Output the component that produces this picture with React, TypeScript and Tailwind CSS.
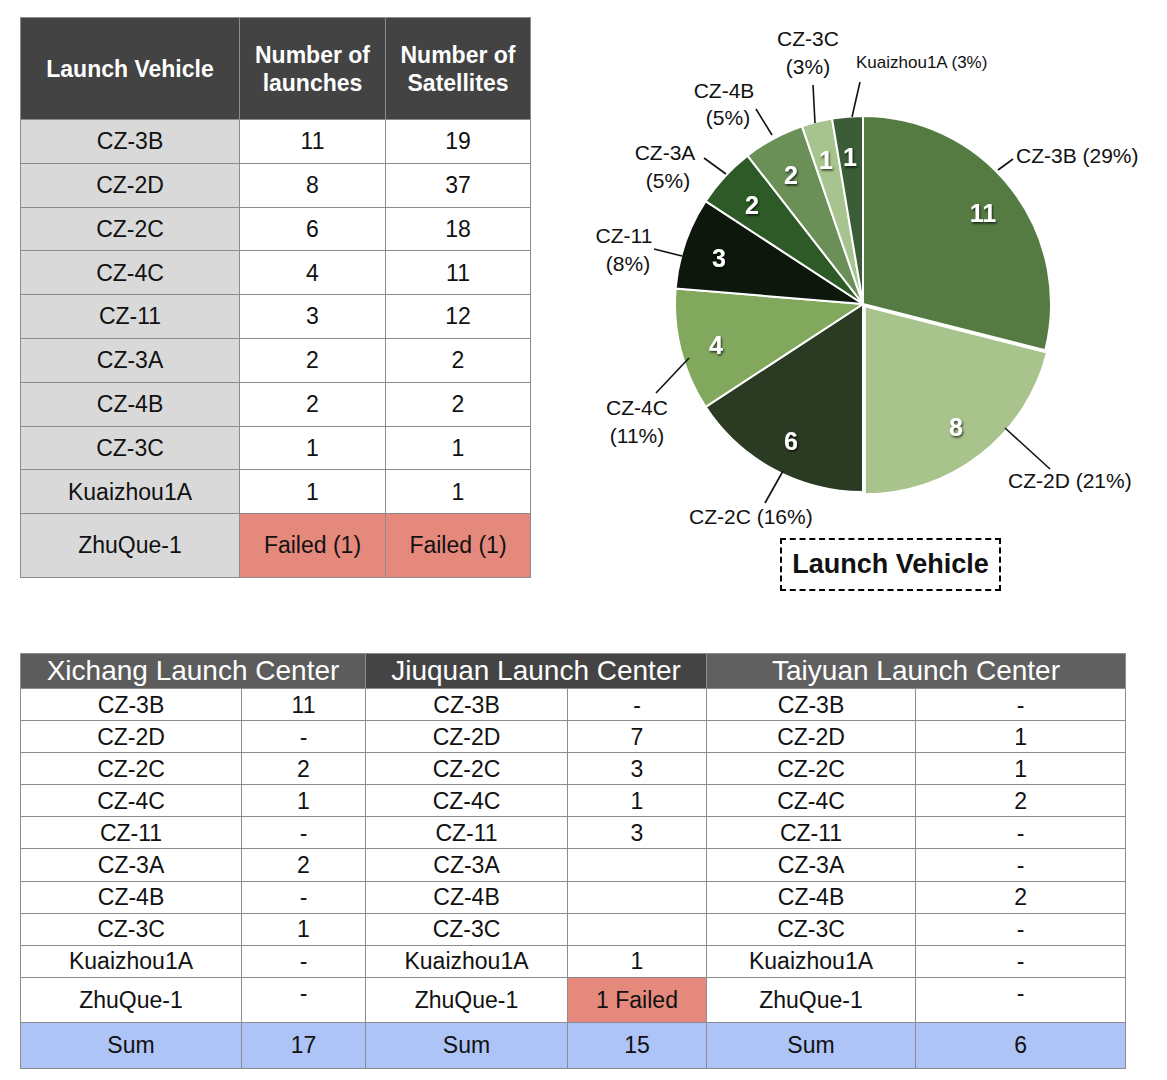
import React from 'react';

const topRows = [
  ['CZ-3B', '11', '19'],
  ['CZ-2D', '8', '37'],
  ['CZ-2C', '6', '18'],
  ['CZ-4C', '4', '11'],
  ['CZ-11', '3', '12'],
  ['CZ-3A', '2', '2'],
  ['CZ-4B', '2', '2'],
  ['CZ-3C', '1', '1'],
  ['Kuaizhou1A', '1', '1'],
];

const vehicles = ['CZ-3B', 'CZ-2D', 'CZ-2C', 'CZ-4C', 'CZ-11', 'CZ-3A', 'CZ-4B', 'CZ-3C', 'Kuaizhou1A'];
const xichang = ['11', '-', '2', '1', '-', '2', '-', '1', '-'];
const jiuquan = ['-', '7', '3', '1', '3', '', '', '', '1'];
const taiyuan = ['-', '1', '1', '2', '-', '-', '2', '-', '-'];

const slices = [
  { v: 11, color: '#557a42', explode: 0 },
  { v: 8, color: '#a9c38c', explode: 3 },
  { v: 6, color: '#2a3a23', explode: 0 },
  { v: 4, color: '#82a85e', explode: 0 },
  { v: 3, color: '#0d170b', explode: 0 },
  { v: 2, color: '#2e5a27', explode: 0 },
  { v: 2, color: '#6a9058', explode: 0 },
  { v: 1, color: '#a7c48e', explode: 0 },
  { v: 1, color: '#3a5d37', explode: 0 },
];

const numbers = [
  { t: '11', x: 982, y: 213 },
  { t: '8', x: 955, y: 427 },
  { t: '6', x: 790, y: 441 },
  { t: '4', x: 715, y: 345 },
  { t: '3', x: 718, y: 258 },
  { t: '2', x: 751, y: 205 },
  { t: '2', x: 790, y: 175 },
  { t: '1', x: 825, y: 160 },
  { t: '1', x: 849, y: 157 },
];

const leaders = [
  [997, 170, 1012, 159],
  [1004, 428, 1049, 469],
  [782, 471, 764, 503],
  [688, 358, 655, 393],
  [653, 249, 681, 256],
  [703, 158, 725, 174],
  [755, 109, 771, 135],
  [812, 85, 814, 123],
  [859, 82, 851, 117],
];

const CX = 862;
const CY = 304;
const R = 188;

function pt(a: number, dx = 0, dy = 0) {
  const rad = (a * Math.PI) / 180;
  return [CX + dx + R * Math.sin(rad), CY + dy - R * Math.cos(rad)];
}

function PieChart() {
  const total = slices.reduce((s, x) => s + x.v, 0);
  let acc = 0;
  const paths = slices.map((s, i) => {
    const a0 = (acc / total) * 360;
    acc += s.v;
    const a1 = (acc / total) * 360;
    const mid = ((a0 + a1) / 2) * (Math.PI / 180);
    const dx = s.explode * Math.sin(mid);
    const dy = -s.explode * Math.cos(mid);
    const [x0, y0] = pt(a0, dx, dy);
    const [x1, y1] = pt(a1, dx, dy);
    const large = a1 - a0 > 180 ? 1 : 0;
    const d = `M ${CX + dx} ${CY + dy} L ${x0} ${y0} A ${R} ${R} 0 ${large} 1 ${x1} ${y1} Z`;
    return <path key={i} d={d} fill={s.color} stroke="#fff" strokeWidth={2} strokeLinejoin="round" />;
  });

  const label = 'font-["Liberation_Sans",Arial,sans-serif]';

  return (
    <svg width={637} height={530} viewBox="530 0 637 530" className={label}>
      <defs>
        <filter id="numShadow" x="-50%" y="-50%" width="200%" height="200%">
          <feDropShadow dx="1" dy="1.5" stdDeviation="1.2" floodColor="#000" floodOpacity="0.75" />
        </filter>
      </defs>
      {paths}
      {numbers.map((n, i) => (
        <text
          key={i}
          x={n.x}
          y={n.y}
          textAnchor="middle"
          dominantBaseline="central"
          fontSize={25}
          fontWeight={700}
          fill="#fff"
          filter="url(#numShadow)"
        >
          {n.t}
        </text>
      ))}
      {leaders.map((l, i) => (
        <line key={i} x1={l[0]} y1={l[1]} x2={l[2]} y2={l[3]} stroke="#111" strokeWidth={1.6} />
      ))}
      <g fill="#111" fontSize={21} dominantBaseline="central">
        <text x={1015} y={155}>CZ-3B (29%)</text>
        <text x={1007} y={480}>CZ-2D (21%)</text>
        <text x={688} y={516}>CZ-2C (16%)</text>
        <text x={636} y={407} textAnchor="middle">CZ-4C</text>
        <text x={636} y={435} textAnchor="middle">(11%)</text>
        <text x={623} y={235} textAnchor="middle">CZ-11</text>
        <text x={627} y={263} textAnchor="middle">(8%)</text>
        <text x={664} y={152} textAnchor="middle">CZ-3A</text>
        <text x={667} y={180} textAnchor="middle">(5%)</text>
        <text x={723} y={90} textAnchor="middle">CZ-4B</text>
        <text x={727} y={117} textAnchor="middle">(5%)</text>
        <text x={807} y={38} textAnchor="middle">CZ-3C</text>
        <text x={807} y={66} textAnchor="middle">(3%)</text>
        <text x={855} y={62} fontSize={17}>Kuaizhou1A (3%)</text>
      </g>
    </svg>
  );
}

const cell = 'border border-[#8c8c8c] text-center align-middle p-0';

function VehicleTable() {
  return (
    <table className="table-fixed border-collapse w-[510px] text-[23px] text-[#111]">
      <colgroup>
        <col className="w-[219px]" />
        <col className="w-[146px]" />
        <col className="w-[145px]" />
      </colgroup>
      <thead>
        <tr className="h-[102px] bg-[#434343] text-white font-bold leading-[28px]">
          <th className={cell}>Launch Vehicle</th>
          <th className={cell}>
            Number of
            <br />
            launches
          </th>
          <th className={cell}>
            Number of
            <br />
            Satellites
          </th>
        </tr>
      </thead>
      <tbody>
        {topRows.map((r) => (
          <tr key={r[0]} className="h-[43.8px] bg-white">
            <td className={`${cell} bg-[#d9d9d9]`}>{r[0]}</td>
            <td className={cell}>{r[1]}</td>
            <td className={cell}>{r[2]}</td>
          </tr>
        ))}
        <tr className="h-[64px]">
          <td className={`${cell} bg-[#d9d9d9]`}>ZhuQue-1</td>
          <td className={`${cell} bg-[#e6897d]`}>Failed (1)</td>
          <td className={`${cell} bg-[#e6897d]`}>Failed (1)</td>
        </tr>
      </tbody>
    </table>
  );
}

function CenterTable() {
  return (
    <table className="table-fixed border-collapse w-[1105px] text-[23px] text-[#111] leading-[26px]">
      <colgroup>
        <col className="w-[221px]" />
        <col className="w-[124px]" />
        <col className="w-[202px]" />
        <col className="w-[139px]" />
        <col className="w-[209px]" />
        <col className="w-[210px]" />
      </colgroup>
      <thead>
        <tr className="h-[35px] text-white text-[28px] font-normal leading-[32px]">
          <th colSpan={2} className={`${cell} font-normal bg-[#5c5c5c]`}>Xichang Launch Center</th>
          <th colSpan={2} className={`${cell} font-normal bg-[#444444]`}>Jiuquan Launch Center</th>
          <th colSpan={2} className={`${cell} font-normal bg-[#606060]`}>Taiyuan Launch Center</th>
        </tr>
      </thead>
      <tbody>
        {vehicles.map((v, i) => (
          <tr key={v} className="h-[32.1px]">
            <td className={cell}>{v}</td>
            <td className={cell}>{xichang[i]}</td>
            <td className={cell}>{v}</td>
            <td className={cell}>{jiuquan[i]}</td>
            <td className={cell}>{v}</td>
            <td className={cell}>{taiyuan[i]}</td>
          </tr>
        ))}
        <tr className="h-[45px]">
          <td className={cell}>ZhuQue-1</td>
          <td className={`${cell} pb-[14px]`}>-</td>
          <td className={cell}>ZhuQue-1</td>
          <td className={`${cell} bg-[#e6897d]`}>1 Failed</td>
          <td className={cell}>ZhuQue-1</td>
          <td className={`${cell} pb-[14px]`}>-</td>
        </tr>
        <tr className="h-[46px] bg-[#aec3f6]">
          <td className={cell}>Sum</td>
          <td className={cell}>17</td>
          <td className={cell}>Sum</td>
          <td className={cell}>15</td>
          <td className={cell}>Sum</td>
          <td className={cell}>6</td>
        </tr>
      </tbody>
    </table>
  );
}

export default function App() {
  return (
    <div className="w-[1167px] h-[1080px] bg-white overflow-hidden font-['Liberation_Sans',Arial,sans-serif]">
      <div className="flex items-start">
        <div className="pt-[17px] pl-[20px]">
          <VehicleTable />
        </div>
        <div className="flex flex-col">
          <PieChart />
          <div className="mt-[8px] ml-[249px] w-[221px] h-[53px] border-2 border-dashed border-black flex items-center justify-center text-[27px] font-bold text-[#111]">
            Launch Vehicle
          </div>
        </div>
      </div>
      <div className="mt-[62px] ml-[20px]">
        <CenterTable />
      </div>
    </div>
  );
}
